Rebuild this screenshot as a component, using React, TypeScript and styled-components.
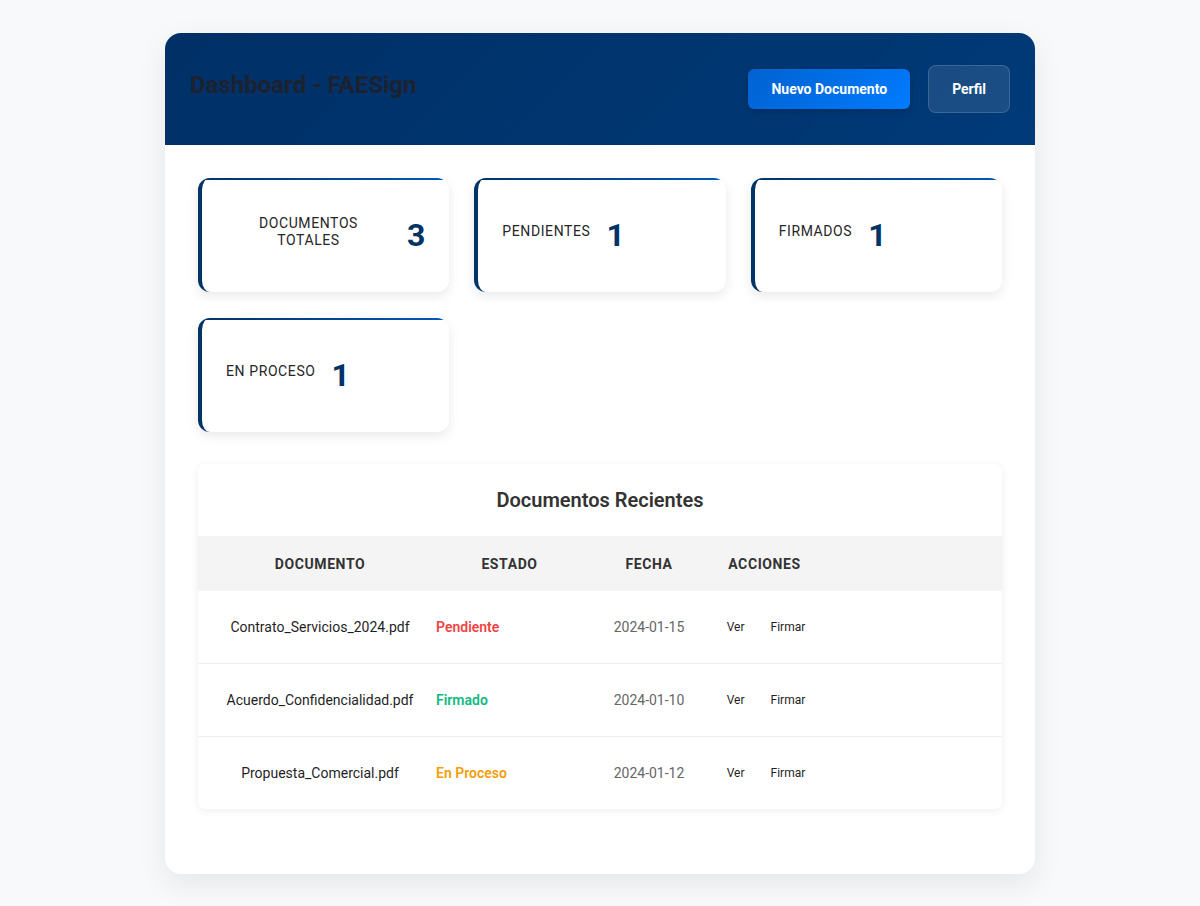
import React from "react";
import styled, { createGlobalStyle } from "styled-components";

const GlobalStyle = createGlobalStyle`
  * {
    box-sizing: border-box;
  }
  body {
    margin: 0;
    padding: 33px 0;
    background: #f8f9fb;
    font-family: Roboto, "Liberation Sans", Arial, sans-serif;
    color: #333;
  }
`;

const Container = styled.div`
  width: 870px;
  margin: 0 auto;
  background: #fff;
  border-radius: 16px;
  overflow: hidden;
  box-shadow: 0 10px 30px rgba(0, 0, 0, 0.08);
`;

const Header = styled.header`
  height: 112px;
  padding: 0 25px;
  display: flex;
  align-items: center;
  justify-content: space-between;
  background: linear-gradient(135deg, #003066 0%, #003a78 100%);
`;

const Title = styled.h1`
  margin: 0 0 8px;
  font-size: 24px;
  font-weight: 700;
  color: #1c2230;
`;

const HeaderActions = styled.div`
  display: flex;
  align-items: center;
  gap: 18px;
`;

const PrimaryButton = styled.button`
  height: 40px;
  padding: 0 23px;
  border: none;
  border-radius: 6px;
  background: linear-gradient(135deg, #0062d0 0%, #007bff 100%);
  color: #fff;
  font-family: inherit;
  font-size: 14px;
  font-weight: 700;
  box-shadow: 0 2px 6px rgba(0, 0, 0, 0.2);
`;

const GhostButton = styled.button`
  height: 48px;
  padding: 0 23px;
  border: 1px solid rgba(255, 255, 255, 0.15);
  border-radius: 8px;
  background: rgba(255, 255, 255, 0.1);
  color: #fff;
  font-family: inherit;
  font-size: 14px;
  font-weight: 700;
`;

const Content = styled.main`
  padding: 33px;
`;

const StatsGrid = styled.div`
  display: grid;
  grid-template-columns: repeat(3, 1fr);
  gap: 26px 25px;
  margin-bottom: 32px;
`;

const StatCard = styled.div`
  height: 114px;
  padding: 0 24px;
  display: flex;
  align-items: center;
  gap: 16px;
  border-left: 4px solid #003366;
  border-radius: 12px;
  background: linear-gradient(90deg, #003366, #0058b8) top / 100% 2px no-repeat,
    #fff;
  box-shadow: 0 4px 12px rgba(0, 0, 0, 0.09);
`;

const StatLabel = styled.h3`
  margin: 0 0 6px;
  font-size: 14px;
  font-weight: 400;
  line-height: 1.22;
  letter-spacing: 0.6px;
  text-transform: uppercase;
  text-align: center;
  color: #262626;
`;

const StatValue = styled.span`
  font-size: 32px;
  font-weight: 700;
  color: #003366;
`;

const Section = styled.section`
  background: #fff;
  border-radius: 8px;
  box-shadow: 0 2px 8px rgba(0, 0, 0, 0.07);
  overflow: hidden;
  margin-bottom: 32px;
`;

const SectionTitle = styled.h2`
  margin: 0;
  height: 72px;
  display: flex;
  align-items: center;
  justify-content: center;
  font-size: 20px;
  font-weight: 600;
  color: #333;
`;

const Row = styled.div<{ $head?: boolean; $last?: boolean }>`
  display: grid;
  grid-template-columns: 232px 159px 120px 111px 1fr;
  align-items: center;
  height: ${(p) => (p.$head ? "55px" : p.$last ? "72px" : "73px")};
  background: ${(p) => (p.$head ? "#f4f4f4" : "#fff")};
  border-bottom: ${(p) => (p.$head || p.$last ? "none" : "1px solid #eee")};
`;

const HeadCell = styled.div<{ $first?: boolean }>`
  text-align: center;
  padding-left: ${(p) => (p.$first ? "12px" : "0")};
  font-size: 14px;
  font-weight: 700;
  letter-spacing: 0.6px;
  text-transform: uppercase;
  color: #333;
`;

const NameCell = styled.div`
  text-align: center;
  padding-left: 12px;
  font-size: 14px;
  font-weight: 400;
  color: #1f1f1f;
`;

const StatusCell = styled.div<{ $color: string }>`
  padding-left: 6px;
  font-size: 14px;
  font-weight: 600;
  color: ${(p) => p.$color};
`;

const DateCell = styled.div`
  text-align: center;
  font-size: 14px;
  color: #666;
`;

const ActionsCell = styled.div`
  display: flex;
  justify-content: center;
  gap: 10px;
  padding-left: 3px;
`;

const ActionButton = styled.button`
  padding: 4px 8px;
  border: none;
  background: transparent;
  font-family: inherit;
  font-size: 12px;
  font-weight: 400;
  color: #1f1f1f;
`;

const stats = [
  { label: "Documentos Totales", value: 3 },
  { label: "Pendientes", value: 1 },
  { label: "Firmados", value: 1 },
  { label: "En Proceso", value: 1 },
];

const statusColors: Record<string, string> = {
  Pendiente: "#ef4444",
  Firmado: "#10b981",
  "En Proceso": "#f59e0b",
};

const documents = [
  { name: "Contrato_Servicios_2024.pdf", status: "Pendiente", date: "2024-01-15" },
  { name: "Acuerdo_Confidencialidad.pdf", status: "Firmado", date: "2024-01-10" },
  { name: "Propuesta_Comercial.pdf", status: "En Proceso", date: "2024-01-12" },
];

const App: React.FC = () => {
  return (
    <>
      <GlobalStyle />
      <Container>
        <Header>
          <Title>Dashboard - FAESign</Title>
          <HeaderActions>
            <PrimaryButton>Nuevo Documento</PrimaryButton>
            <GhostButton>Perfil</GhostButton>
          </HeaderActions>
        </Header>
        <Content>
          <StatsGrid>
            {stats.map((s) => (
              <StatCard key={s.label}>
                <StatLabel>{s.label}</StatLabel>
                <StatValue>{s.value}</StatValue>
              </StatCard>
            ))}
          </StatsGrid>
          <Section>
            <SectionTitle>Documentos Recientes</SectionTitle>
            <Row $head>
              <HeadCell $first>Documento</HeadCell>
              <HeadCell>Estado</HeadCell>
              <HeadCell>Fecha</HeadCell>
              <HeadCell>Acciones</HeadCell>
            </Row>
            {documents.map((d, i) => (
              <Row key={d.name} $last={i === documents.length - 1}>
                <NameCell>{d.name}</NameCell>
                <StatusCell $color={statusColors[d.status]}>{d.status}</StatusCell>
                <DateCell>{d.date}</DateCell>
                <ActionsCell>
                  <ActionButton>Ver</ActionButton>
                  <ActionButton>Firmar</ActionButton>
                </ActionsCell>
              </Row>
            ))}
          </Section>
        </Content>
      </Container>
    </>
  );
};

export default App;
